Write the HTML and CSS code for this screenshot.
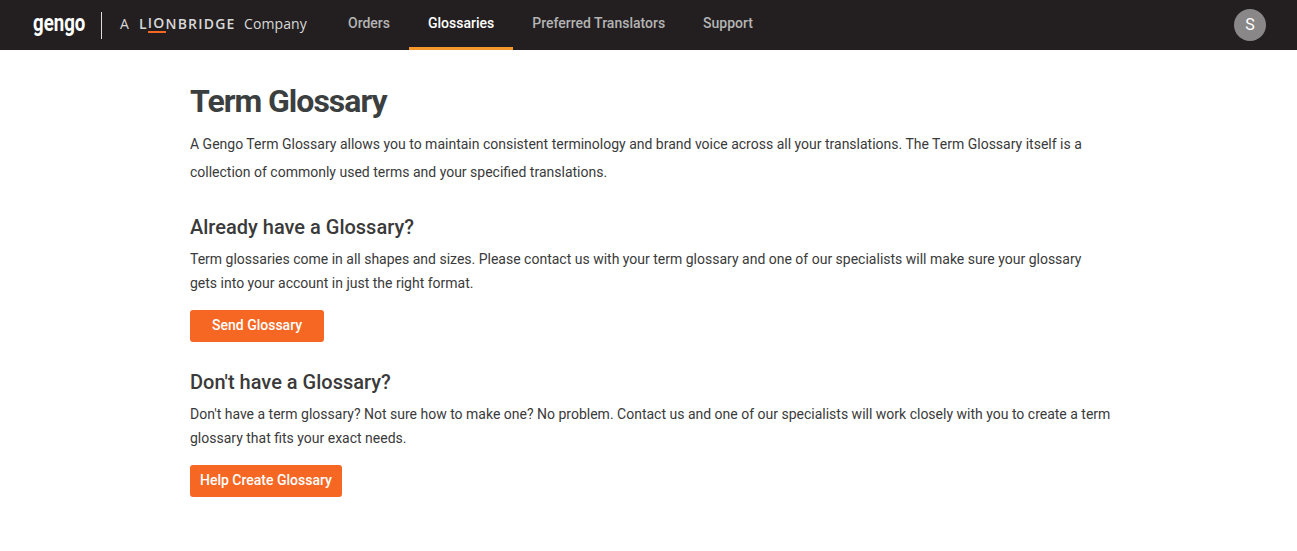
FILE: index.html
```html
<!DOCTYPE html>
<html lang="en">
<head>
<meta charset="utf-8">
<title>Term Glossary</title>
<link rel="stylesheet" href="styles.css">
</head>
<body>
<header class="topbar">
  <div class="brand">
    <span class="brand-gengo">gengo</span>
    <span class="brand-rule"></span>
    <span class="brand-a">A</span>
    <span class="brand-lion">L<span class="brand-io">IO</span>NBRIDGE</span>
    <span class="brand-company">Company</span>
  </div>
  <nav class="nav">
    <a class="nav-item">Orders</a>
    <a class="nav-item is-active">Glossaries</a>
    <a class="nav-item">Preferred Translators</a>
    <a class="nav-item">Support</a>
  </nav>
  <div class="avatar">S</div>
</header>
<main class="content">
  <h1 class="title">Term Glossary</h1>
  <p class="lead">A Gengo Term Glossary allows you to maintain consistent terminology and brand voice across all your translations. The Term Glossary itself is a collection of commonly used terms and your specified translations.</p>
  <section class="block">
    <h2 class="heading">Already have a Glossary?</h2>
    <p class="text">Term glossaries come in all shapes and sizes. Please contact us with your term glossary and one of our specialists will make sure your glossary gets into your account in just the right format.</p>
    <a class="btn btn-wide">Send Glossary</a>
  </section>
  <section class="block">
    <h2 class="heading">Don't have a Glossary?</h2>
    <p class="text">Don't have a term glossary? Not sure how to make one? No problem. Contact us and one of our specialists will work closely with you to create a term glossary that fits your exact needs.</p>
    <a class="btn">Help Create Glossary</a>
  </section>
</main>
</body>
</html>
```
FILE: styles.css
```css
* { box-sizing: border-box; }
body { margin: 0; background: #fff; font-family: Roboto, "Liberation Sans", sans-serif; color: #3a3a3a; }
.topbar { height: 50px; background: #231f20; display: flex; align-items: stretch; padding-right: 31px; }
.brand { display: flex; align-items: center; padding-left: 33px; width: 329px; color: #d8d8d8; flex: none; }
.brand-gengo { font-family: Roboto, sans-serif; font-weight: 700; font-size: 23px; color: #fff; letter-spacing: 0; width: 52px; margin-top: -4px; line-height: 1; transform: scaleX(0.81); transform-origin: left center; }
.brand-rule { width: 1px; height: 27px; background: #ddd; margin: 0 18px 0 16px; }
.brand-a { font-family: "Open Sans", sans-serif; font-size: 14px; width: 19px; margin-top: -3px; }
.brand-lion { font-family: "Open Sans", sans-serif; font-size: 14px; font-weight: 600; letter-spacing: 1.2px; width: 105px; white-space: nowrap; line-height: 19px; margin-top: -3px; }
.brand-io { display: inline-block; border-bottom: 2px solid #f26722; line-height: 17px; height: 19px; vertical-align: top; }
.brand-company { font-family: "Open Sans", sans-serif; font-size: 14px; letter-spacing: 0.1px; margin-top: -3px; }
.nav { display: flex; flex: 1; }
.nav-item { padding: 0 19px; line-height: 46px; height: 50px; font-size: 14px; font-weight: 500; color: #b4b4b4; white-space: nowrap; }
.nav-item.is-active { color: #fff; border-bottom: 3px solid #f7982a; }
.avatar { width: 32px; height: 32px; margin-top: 9px; border-radius: 50%; background: #8a8788; color: #fff; text-align: center; line-height: 32px; font-size: 16px; }
.content { width: 920.5px; margin-left: 190px; }
.title { margin: 0; padding-top: 32px; font-size: 32px; line-height: 38px; font-weight: 700; letter-spacing: -1px; color: #3c3f40; }
.lead { margin: 10px 0 0; font-size: 14px; line-height: 28px; color: #3a3a3a; }
.block { margin-top: 27px; }
.block + .block { margin-top: 26px; }
.heading { margin: 0; font-size: 20px; line-height: 28px; font-weight: 500; color: #3a3a3a; }
.text { margin: 6px 0 0; font-size: 14px; line-height: 24px; }
.btn { display: block; width: fit-content; margin-top: 15px; height: 32px; padding: 0 10px; background: #f66724; color: #fff; border-radius: 3px; font-size: 14px; font-weight: 500; line-height: 30px; }
.btn-wide { padding: 0 22px; }
```
